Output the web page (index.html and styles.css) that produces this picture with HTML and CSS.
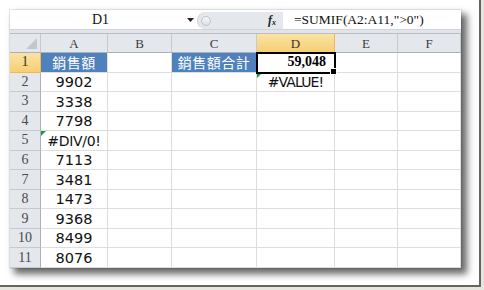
FILE: index.html
```html
<!DOCTYPE html>
<html lang="zh-Hant">
<head>
    <meta charset="UTF-8">
    <title>SUMIF 銷售額合計</title>
    <link rel="stylesheet" href="styles.css">
</head>
<body>
<div class="frame">
    <div class="sheet">
        <div class="fbar">
            <div class="namebox">
                <span class="name">D1</span>
                <svg class="drop" width="7" height="4" viewBox="0 0 7 4"><path d="M0 0H7L3.5 4Z" fill="#222"/></svg>
            </div>
            <div class="fbtns">
                <span class="knob"></span>
                <span class="fx"><i>f</i><sub>x</sub></span>
            </div>
            <div class="finput">=SUMIF(A2:A11,"&gt;0")</div>
        </div>
        <div class="gap"></div>
        <div class="grid">
            <div class="corner"><span class="tri"></span></div>
            <div class="colh">A</div>
            <div class="colh">B</div>
            <div class="colh">C</div>
            <div class="colh sel">D</div>
            <div class="colh">E</div>
            <div class="colh">F</div>

            <div class="rowh sel">1</div>
            <div class="cell head">銷售額</div>
            <div class="cell"></div>
            <div class="cell head">銷售額合計</div>
            <div class="cell active">59,048</div>
            <div class="cell"></div>
            <div class="cell"></div>

            <div class="rowh">2</div>
            <div class="cell num">9902</div>
            <div class="cell"></div>
            <div class="cell"></div>
            <div class="cell num err tight">#VALUE!</div>
            <div class="cell"></div>
            <div class="cell"></div>

            <div class="rowh">3</div>
            <div class="cell num">3338</div>
            <div class="cell"></div>
            <div class="cell"></div>
            <div class="cell"></div>
            <div class="cell"></div>
            <div class="cell"></div>

            <div class="rowh">4</div>
            <div class="cell num">7798</div>
            <div class="cell"></div>
            <div class="cell"></div>
            <div class="cell"></div>
            <div class="cell"></div>
            <div class="cell"></div>

            <div class="rowh">5</div>
            <div class="cell num err">#DIV/0!</div>
            <div class="cell"></div>
            <div class="cell"></div>
            <div class="cell"></div>
            <div class="cell"></div>
            <div class="cell"></div>

            <div class="rowh">6</div>
            <div class="cell num">7113</div>
            <div class="cell"></div>
            <div class="cell"></div>
            <div class="cell"></div>
            <div class="cell"></div>
            <div class="cell"></div>

            <div class="rowh">7</div>
            <div class="cell num">3481</div>
            <div class="cell"></div>
            <div class="cell"></div>
            <div class="cell"></div>
            <div class="cell"></div>
            <div class="cell"></div>

            <div class="rowh">8</div>
            <div class="cell num">1473</div>
            <div class="cell"></div>
            <div class="cell"></div>
            <div class="cell"></div>
            <div class="cell"></div>
            <div class="cell"></div>

            <div class="rowh">9</div>
            <div class="cell num">9368</div>
            <div class="cell"></div>
            <div class="cell"></div>
            <div class="cell"></div>
            <div class="cell"></div>
            <div class="cell"></div>

            <div class="rowh">10</div>
            <div class="cell num">8499</div>
            <div class="cell"></div>
            <div class="cell"></div>
            <div class="cell"></div>
            <div class="cell"></div>
            <div class="cell"></div>

            <div class="rowh">11</div>
            <div class="cell num">8076</div>
            <div class="cell"></div>
            <div class="cell"></div>
            <div class="cell"></div>
            <div class="cell"></div>
            <div class="cell"></div>
        </div>
    </div>
</div>
</body>
</html>
```

FILE: styles.css
```css
body {
    margin: 0;
    background: #e6e6de;
    font-family: "Liberation Serif", serif;
}
.frame {
    width: 481px;
    height: 287px;
    padding: 10px 0 0 10px;
    box-sizing: border-box;
    background: #fff;
    border-right: 2px solid #66665e;
    border-bottom: 2px solid #66665e;
}
.sheet {
    width: 451px;
    height: 258px;
    background: #fff;
    box-shadow: 0 0 0 1px rgba(0, 0, 0, 0.08), 5px 5px 7px 1px rgba(0, 0, 0, 0.6);
    display: flex;
    flex-direction: column;
}
.fbar {
    height: 19px;
    flex: none;
    display: flex;
    background: #fff;
}
.namebox {
    width: 187px;
    display: flex;
    align-items: center;
}
.name {
    flex: 1;
    text-align: center;
    font-size: 14px;
    color: #111;
    padding-left: 4px;
}
.drop {
    margin-right: 3px;
}
.fbtns {
    width: 86px;
    margin-top: 2px;
    background: #e4e7ec;
    border-radius: 10px 0 0 10px;
    border-left: 1px solid #c9ced6;
    display: flex;
    align-items: center;
    justify-content: space-between;
    padding: 0 7px 0 3px;
    box-sizing: border-box;
}
.knob {
    width: 8px;
    height: 8px;
    border-radius: 50%;
    border: 1px solid #bfc4cc;
    background: linear-gradient(#f6f7f9, #dde1e6);
}
.fx {
    font-size: 12px;
    color: #222;
    font-weight: bold;
}
.fx sub {
    font-size: 8px;
    vertical-align: -1px;
    font-style: italic;
}
.finput {
    flex: 1;
    font-size: 13.5px;
    color: #111;
    padding-left: 11px;
    line-height: 19px;
}
.gap {
    height: 5px;
    flex: none;
    background: #e1e5ea;
    border-top: 1px solid #d0d5dc;
    border-bottom: 1px solid #b8bec6;
    box-sizing: border-box;
}
.grid {
    flex: 1;
    min-height: 0;
    display: grid;
    grid-template-columns: 31px 67px 64px 85px 78px 63px 63px;
    grid-template-rows: 19px repeat(11, minmax(0, 1fr));
    line-height: 1;
}
.corner {
    background: #e4e7ec;
    border-right: 1px solid #c5cad2;
    border-bottom: 1px solid #aab0b9;
    position: relative;
}
.tri {
    position: absolute;
    right: 3px;
    bottom: 3px;
    width: 0;
    height: 0;
    border-left: 11px solid transparent;
    border-bottom: 11px solid #c4c8ce;
}
.colh {
    background: #e4e7ec;
    border-right: 1px solid #c5cad2;
    border-bottom: 1px solid #aab0b9;
    display: flex;
    align-items: center;
    justify-content: center;
    font-size: 13px;
    color: #3c3c3c;
}
.rowh {
    background: #e4e7ec;
    border-right: 1px solid #aab0b9;
    border-bottom: 1px solid #c5cad2;
    display: flex;
    align-items: center;
    justify-content: center;
    font-size: 14px;
    color: #4a4a4a;
}
.colh.sel,
.rowh.sel {
    background: linear-gradient(#fbe3a4, #f6cf72);
    border-color: #f2b84b;
    color: #333;
}
.cell {
    border-right: 1px solid #dcdedf;
    border-bottom: 1px solid #dcdedf;
    display: flex;
    align-items: center;
    justify-content: center;
    position: relative;
    overflow: visible;
}
.head {
    background: #4f81bd;
    color: #fff;
    font-family: "Noto Sans CJK TC", sans-serif;
    font-size: 14px;
    letter-spacing: 0.5px;
}
.num {
    font-family: "DejaVu Sans", sans-serif;
    font-size: 14.5px;
    color: #111;
    padding-top: 1px;
}
.err {
    font-size: 14px;
    letter-spacing: -0.3px;
}
.err.tight {
    letter-spacing: -0.9px;
}
.err::before {
    content: "";
    position: absolute;
    left: 0;
    top: 0;
    border-top: 5px solid #1f9a3a;
    border-right: 5px solid transparent;
}
.active {
    justify-content: flex-end;
    padding-right: 8px;
    font-weight: bold;
    font-size: 14px;
    color: #000;
    outline: 2px solid #000;
    outline-offset: -1px;
    z-index: 1;
}
.active::after {
    content: "";
    position: absolute;
    right: -3px;
    bottom: -3px;
    width: 5px;
    height: 5px;
    background: #000;
    border: 1px solid #fff;
}
```
